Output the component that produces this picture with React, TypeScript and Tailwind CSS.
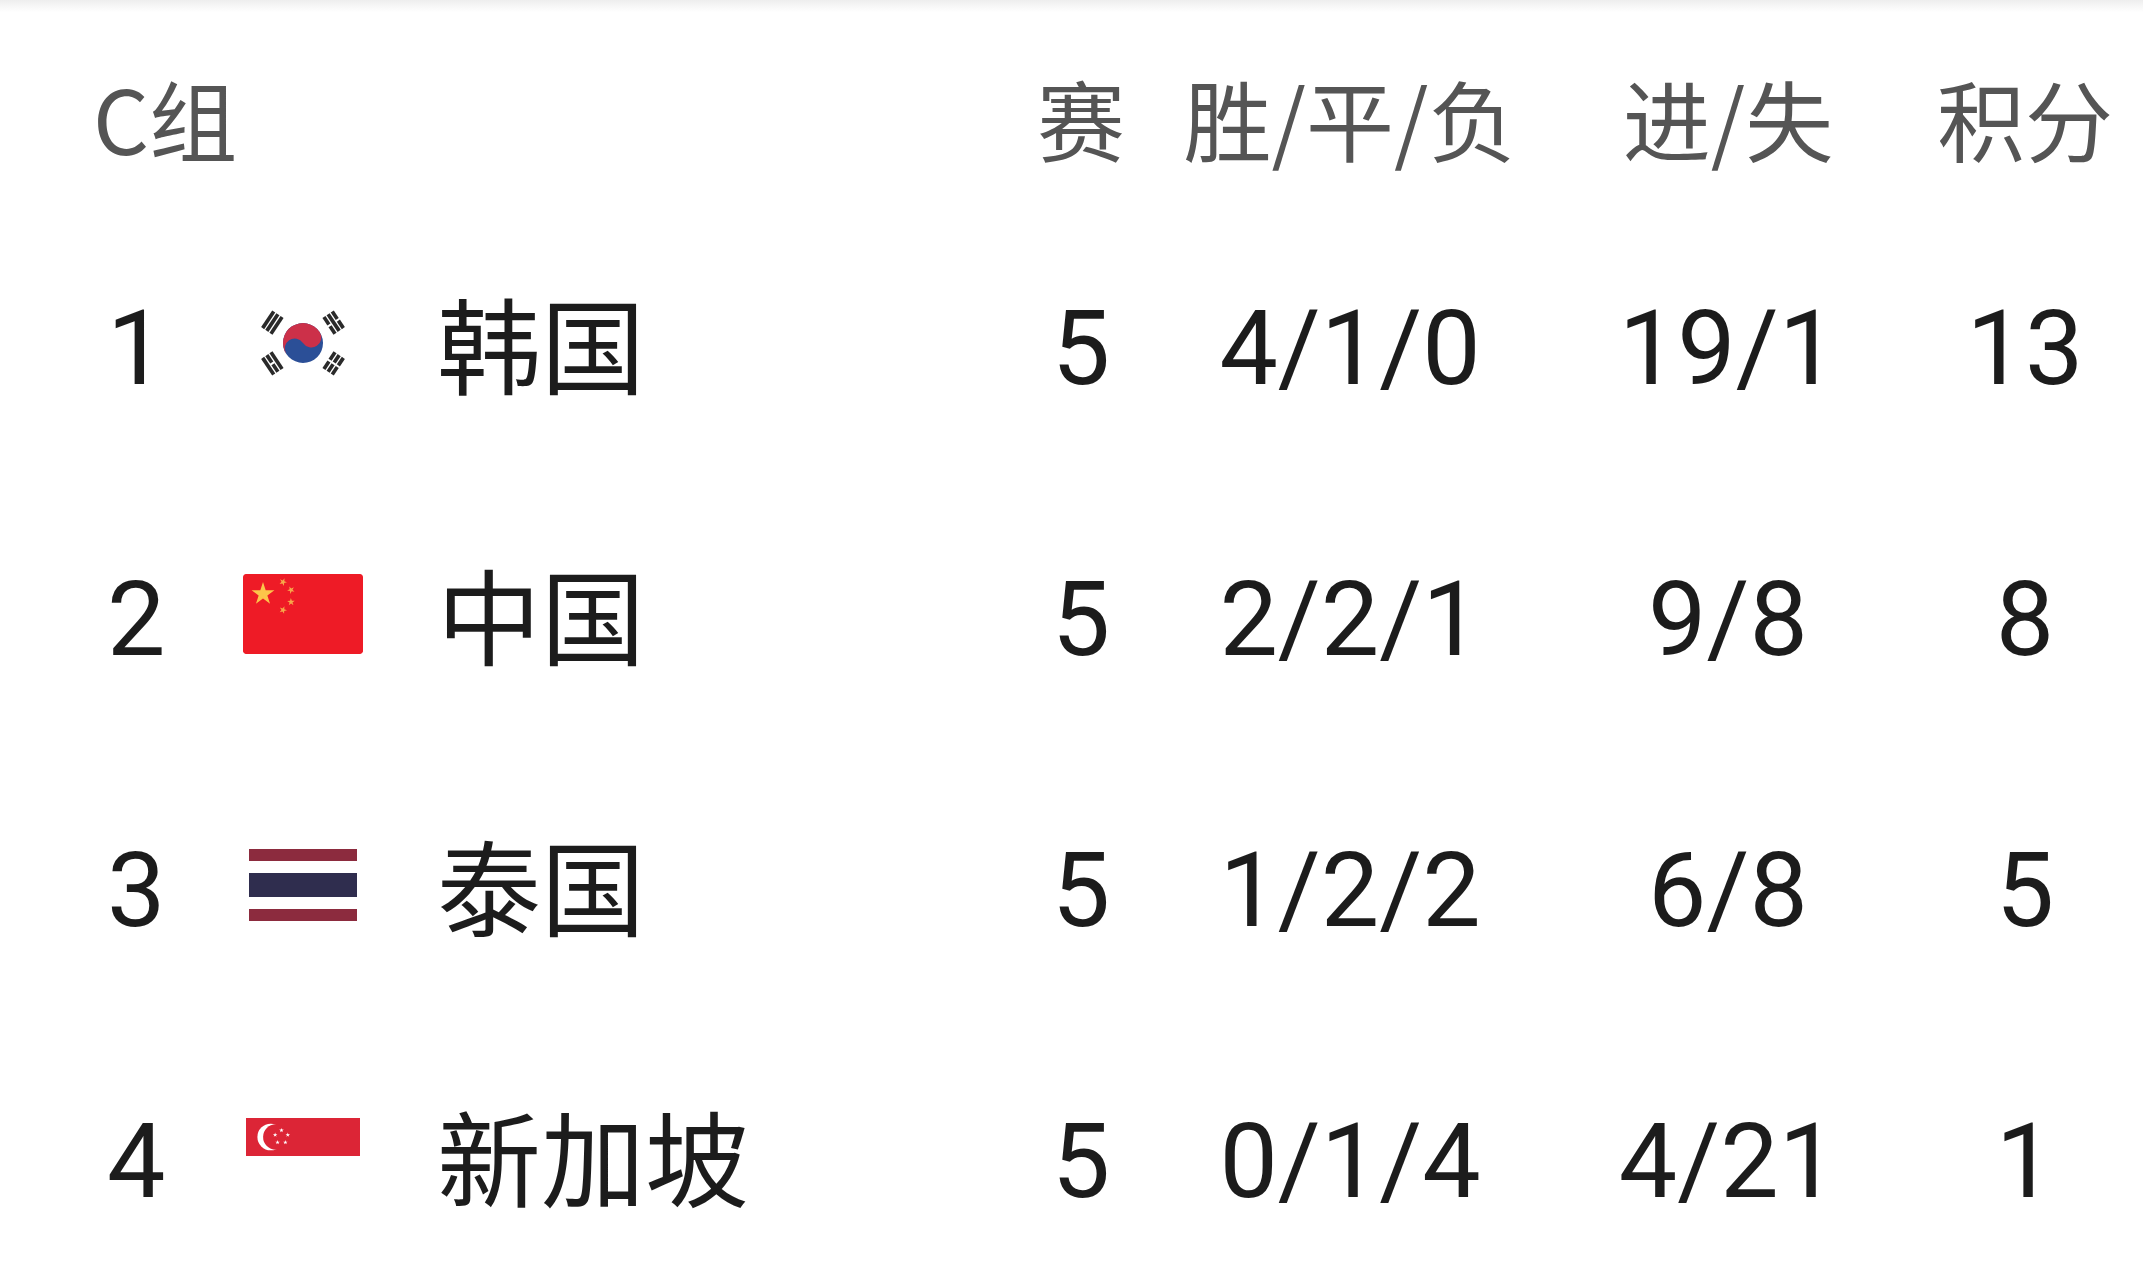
import React from "react";

function starPoints(cx: number, cy: number, r: number, rot = -90) {
  const pts: string[] = [];
  for (let i = 0; i < 10; i++) {
    const rr = i % 2 === 0 ? r : r * 0.382;
    const a = ((rot + i * 36) * Math.PI) / 180;
    pts.push(`${(cx + rr * Math.cos(a)).toFixed(3)},${(cy + rr * Math.sin(a)).toFixed(3)}`);
  }
  return pts.join(" ");
}

function Trigram({ angle, pattern }: { angle: number; pattern: boolean[] }) {
  return (
    <g transform={`translate(36 24) rotate(${angle})`}>
      {pattern.map((solid, i) => {
        const x = 18 + i * 3;
        return solid ? (
          <rect key={i} x={x} y={-6} width={2.2} height={12} fill="#2a2a2a" />
        ) : (
          <g key={i}>
            <rect x={x} y={-6} width={2.2} height={5.4} fill="#2a2a2a" />
            <rect x={x} y={0.6} width={2.2} height={5.4} fill="#2a2a2a" />
          </g>
        );
      })}
    </g>
  );
}

function KoreaFlag() {
  return (
    <svg width="132" height="88" viewBox="0 0 72 48">
      <rect width="72" height="48" fill="#fff" />
      <g transform="rotate(-33.69 36 24)">
        <circle cx="36" cy="24" r="12" fill="#2b4f97" />
        <path d="M24 24 A12 12 0 0 1 48 24 A6 6 0 0 1 36 24 A6 6 0 0 0 24 24 Z" fill="#cc3049" />
      </g>
      <Trigram angle={-146.31} pattern={[true, true, true]} />
      <Trigram angle={33.69} pattern={[false, false, false]} />
      <Trigram angle={-33.69} pattern={[false, true, false]} />
      <Trigram angle={146.31} pattern={[true, false, true]} />
    </svg>
  );
}

function ChinaFlag() {
  const small: [number, number][] = [
    [10, 2],
    [12, 4],
    [12, 7],
    [10, 9],
  ];
  return (
    <svg width="120" height="80" viewBox="0 0 30 20" className="rounded-[3px]">
      <rect width="30" height="20" rx="0.6" fill="#ee1b26" />
      <polygon points={starPoints(5, 5, 3)} fill="#fcc44a" />
      {small.map(([x, y], i) => (
        <polygon
          key={i}
          points={starPoints(x, y, 1, (Math.atan2(5 - y, 5 - x) * 180) / Math.PI)}
          fill="#f7a84a"
        />
      ))}
    </svg>
  );
}

function ThailandFlag() {
  return (
    <svg width="108" height="74" viewBox="0 0 36 24">
      <rect width="36" height="4" y="0" fill="#8c2b3e" />
      <rect width="36" height="4" y="4" fill="#fff" />
      <rect width="36" height="8" y="8" fill="#2f2d4e" />
      <rect width="36" height="4" y="16" fill="#fff" />
      <rect width="36" height="4" y="20" fill="#8c2b3e" />
    </svg>
  );
}

function SingaporeFlag() {
  const stars: [number, number][] = [];
  for (let i = 0; i < 5; i++) {
    const a = ((-90 + i * 72) * Math.PI) / 180;
    stars.push([11.2 + 2.1 * Math.cos(a), 6 + 2.1 * Math.sin(a)]);
  }
  return (
    <svg width="114" height="76" viewBox="0 0 36 24">
      <rect width="36" height="12" y="0" fill="#dc2536" />
      <rect width="36" height="12" y="12" fill="#fff" />
      <circle cx="7.8" cy="6" r="4.2" fill="#fff" />
      <circle cx="9.4" cy="6" r="4" fill="#dc2536" />
      {stars.map(([x, y], i) => (
        <polygon key={i} points={starPoints(x, y, 0.75)} fill="#fff" />
      ))}
    </svg>
  );
}

const rows = [
  { rank: "1", flag: <KoreaFlag />, name: "韩国", p: "5", wdl: "4/1/0", gf: "19/1", pts: "13" },
  { rank: "2", flag: <ChinaFlag />, name: "中国", p: "5", wdl: "2/2/1", gf: "9/8", pts: "8" },
  { rank: "3", flag: <ThailandFlag />, name: "泰国", p: "5", wdl: "1/2/2", gf: "6/8", pts: "5" },
  { rank: "4", flag: <SingaporeFlag />, name: "新加坡", p: "5", wdl: "0/1/4", gf: "4/21", pts: "1" },
];

const cjk = { fontFamily: '"Noto Sans CJK SC", "Noto Sans", sans-serif' };
const num = { fontFamily: 'Roboto, "Noto Sans CJK SC", sans-serif' };

export default function App() {
  return (
    <div className="w-[2143px] h-[1280px] bg-white overflow-hidden flex flex-col">
      <div className="h-[12px] bg-gradient-to-b from-[#eeeeee] to-white shrink-0" />
      <div className="pt-[24px]">
        <div
          className="grid grid-cols-[136px_194px_554px_180px_358px_398px_196px] pl-[107px] h-[177px] items-center text-[#555555] text-[88px] leading-none"
          style={cjk}
        >
          <div className="col-span-3 -ml-[14px] -mt-[16px]">C组</div>
          <div className="text-center -mt-[16px]">赛</div>
          <div className="text-center -mt-[16px]">胜/平/负</div>
          <div className="text-center -mt-[16px]">进/失</div>
          <div className="text-center -mt-[16px]">积分</div>
        </div>
        {rows.map((r) => (
          <div
            key={r.rank}
            className="grid grid-cols-[136px_194px_554px_180px_358px_398px_196px] pl-[107px] h-[271px] items-center text-[#1c1c1c] text-[104px] leading-none"
          >
            <div style={num}>{r.rank}</div>
            <div className="w-[120px] flex justify-center items-center -mt-[12px]">{r.flag}</div>
            <div className="-mt-[14px]" style={cjk}>{r.name}</div>
            <div className="text-center" style={num}>{r.p}</div>
            <div className="text-center" style={num}>{r.wdl}</div>
            <div className="text-center" style={num}>{r.gf}</div>
            <div className="text-center" style={num}>{r.pts}</div>
          </div>
        ))}
      </div>
    </div>
  );
}
